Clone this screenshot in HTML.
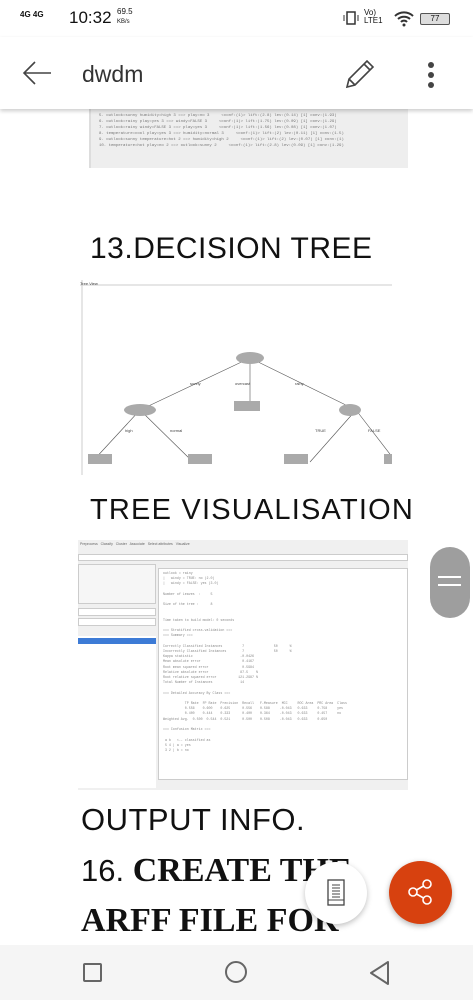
<!DOCTYPE html>
<html><head><meta charset="utf-8"><style>
*{margin:0;padding:0;box-sizing:border-box}
body{width:473px;height:1000px;overflow:hidden;background:#fff;position:relative;font-family:"Liberation Sans",sans-serif;color:#111}
.abs{position:absolute}
.mono{font-family:"Liberation Mono",monospace;font-size:4px;color:#777;white-space:pre;line-height:6px}
</style></head><body>
<div class="abs" style="left:89px;top:105px;width:319px;height:63px;background:#eeeeee;border-left:2px solid #ddd">
<div class="mono" style="position:absolute;left:8px;top:8px">5. outlook=sunny humidity=high 3 ==> play=no 3     &lt;conf:(1)&gt; lift:(2.8) lev:(0.14) [1] conv:(1.93)
6. outlook=rainy play=yes 3 ==> windy=FALSE 3     &lt;conf:(1)&gt; lift:(1.75) lev:(0.09) [1] conv:(1.29)
7. outlook=rainy windy=FALSE 3 ==> play=yes 3     &lt;conf:(1)&gt; lift:(1.56) lev:(0.08) [1] conv:(1.07)
8. temperature=cool play=yes 3 ==> humidity=normal 3     &lt;conf:(1)&gt; lift:(2) lev:(0.11) [1] conv:(1.5)
9. outlook=sunny temperature=hot 2 ==> humidity=high 2     &lt;conf:(1)&gt; lift:(2) lev:(0.07) [1] conv:(1)
10. temperature=hot play=no 2 ==> outlook=sunny 2     &lt;conf:(1)&gt; lift:(2.8) lev:(0.09) [1] conv:(1.29)</div></div>
<div class="abs" style="left:0;top:0;width:473px;height:37px;background:#fff"></div>
<div class="abs" style="left:20px;top:10px;font-size:8px;font-weight:bold">4G 4G</div>
<div class="abs" style="left:69px;top:8px;font-size:17px">10:32</div>
<div class="abs" style="left:117px;top:7px;font-size:8px;line-height:9px">69.5<br><span style="font-size:6px">KB/s</span></div>
<svg class="abs" style="left:343px;top:10px" width="16" height="16"><rect x="4" y="2" width="8" height="12" fill="none" stroke="#333" stroke-width="1.5"/><path d="M1 5v6M15 5v6" stroke="#333"/></svg>
<div class="abs" style="left:364px;top:9px;font-size:8px;line-height:8px">Vo)<br>LTE1</div>
<svg class="abs" style="left:393px;top:9px" width="22" height="18"><path d="M2 7a13 13 0 0 1 18 0M5 10a9 9 0 0 1 12 0M8 13a4 4 0 0 1 6 0" fill="none" stroke="#333" stroke-width="2"/><circle cx="11" cy="16" r="1.5" fill="#333"/></svg>
<div class="abs" style="left:420px;top:13px;width:30px;height:12px;border:1px solid #555;border-radius:2px;font-size:8px;text-align:center;line-height:10px;background:#ddd">77</div>
<div class="abs" style="left:0;top:37px;width:473px;height:72px;background:#fff;box-shadow:0 2px 4px rgba(0,0,0,.2)"></div>
<svg class="abs" style="left:22px;top:60px" width="30" height="26"><path d="M29 13H2M13 2L2 13l11 11" stroke="#444" stroke-width="1.6" fill="none"/></svg>
<div class="abs" style="left:82px;top:61px;font-size:23px;color:#333">dwdm</div>
<svg class="abs" style="left:342px;top:58px" width="34" height="32"><path d="M5 29l2-8L25 3l6 6L13 27zM7 21l6 6M22 6l6 6" stroke="#444" stroke-width="1.6" fill="none"/></svg>
<div class="abs" style="left:428px;top:62px;width:6px;height:6px;border-radius:3px;background:#444;box-shadow:0 10px 0 #444,0 20px 0 #444"></div>
<div class="abs" style="left:90px;top:232px;font-size:30px;color:#111;letter-spacing:0.5px">13.DECISION TREE</div>
<svg class="abs" style="left:80px;top:280px" width="312" height="195">
<rect x="0" y="0" width="312" height="195" fill="#fff"/>
<line x1="0" y1="5" x2="312" y2="5" stroke="#ccc"/><line x1="2" y1="0" x2="2" y2="195" stroke="#ccc"/>
<g stroke="#555" stroke-width=".6"><line x1="170" y1="78" x2="60" y2="130"/><line x1="170" y1="78" x2="170" y2="128"/><line x1="170" y1="78" x2="276" y2="130"/><line x1="60" y1="130" x2="12" y2="182"/><line x1="60" y1="130" x2="113" y2="182"/><line x1="276" y1="130" x2="230" y2="182"/><line x1="276" y1="130" x2="316" y2="182"/></g>
<g fill="#aaa"><ellipse cx="170" cy="78" rx="14" ry="6"/><ellipse cx="60" cy="130" rx="16" ry="6"/><ellipse cx="270" cy="130" rx="11" ry="6"/><rect x="154" y="121" width="26" height="10"/><rect x="8" y="174" width="24" height="10"/><rect x="108" y="174" width="24" height="10"/><rect x="204" y="174" width="24" height="10"/><rect x="304" y="174" width="10" height="10"/></g>
<g font-size="4" fill="#444" font-family="Liberation Sans"><text x="0" y="5">Tree View</text><text x="110" y="105">sunny</text><text x="155" y="105">overcast</text><text x="215" y="105">rainy</text><text x="45" y="152">high</text><text x="90" y="152">normal</text><text x="235" y="152">TRUE</text><text x="288" y="152">FALSE</text></g>
</svg>
<div class="abs" style="left:90px;top:494px;font-size:29px;color:#111;letter-spacing:1.2px">TREE VISUALISATION</div>
<div class="abs" style="left:78px;top:540px;width:330px;height:250px;background:#f0f0f0;overflow:hidden">
<div style="position:absolute;left:0;top:0;width:330px;height:8px;font-size:3.5px;color:#666;padding:2px">Preprocess &nbsp; Classify &nbsp; Cluster &nbsp; Associate &nbsp; Select attributes &nbsp; Visualize</div>
<div style="position:absolute;left:0;top:14px;width:330px;height:7px;background:#fff;border:1px solid #ccc"></div>
<div style="position:absolute;left:0;top:24px;width:78px;height:40px;background:#f6f6f6;border:1px solid #ccc"></div>
<div style="position:absolute;left:0;top:68px;width:78px;height:8px;background:#fff;border:1px solid #ccc"></div>
<div style="position:absolute;left:0;top:78px;width:78px;height:8px;background:#fff;border:1px solid #ccc"></div>
<div style="position:absolute;left:0;top:96px;width:78px;height:152px;background:#fff"><div style="margin-top:2px;height:6px;background:#3d7bd6"></div></div>
<div style="position:absolute;left:80px;top:28px;width:250px;height:212px;background:#fff;border:1px solid #ccc"><div class="mono" style="font-size:3.3px;line-height:5.2px;padding:2px 4px;color:#888">outlook = rainy
|   windy = TRUE: no (2.0)
|   windy = FALSE: yes (3.0)

Number of Leaves  :     5

Size of the tree :      8


Time taken to build model: 0 seconds

=== Stratified cross-validation ===
=== Summary ===

Correctly Classified Instances          7               50      %
Incorrectly Classified Instances        7               50      %
Kappa statistic                        -0.0426
Mean absolute error                     0.4167
Root mean squared error                 0.5984
Relative absolute error                87.5    %
Root relative squared error           121.2987 %
Total Number of Instances              14

=== Detailed Accuracy By Class ===

           TP Rate  FP Rate  Precision  Recall   F-Measure  MCC     ROC Area  PRC Area  Class
           0.556    0.600    0.625      0.556    0.588     -0.043   0.633     0.758     yes
           0.400    0.444    0.333      0.400    0.364     -0.043   0.633     0.457     no
Weighted Avg.  0.500  0.544  0.521      0.500    0.508     -0.043   0.633     0.650

=== Confusion Matrix ===

 a b   <-- classified as
 5 4 | a = yes
 3 2 | b = no</div></div>
</div>
<div class="abs" style="left:430px;top:547px;width:40px;height:71px;border-radius:20px;background:#9e9e9e"></div>
<div class="abs" style="left:438px;top:576px;width:23px;height:2px;background:#fff;box-shadow:0 8px 0 #fff"></div>
<div class="abs" style="left:81px;top:802px;font-size:31px;color:#111;letter-spacing:0.5px">OUTPUT INFO.</div>
<div class="abs" style="left:81px;top:852px;font-size:31px;color:#111;white-space:nowrap">16. <b style="font-family:'Liberation Serif',serif;font-size:34px">CREATE THE</b></div>
<div class="abs" style="left:81px;top:902px;font-size:34px;font-family:'Liberation Serif',serif;font-weight:bold;white-space:nowrap">ARFF FILE FOR</div>
<div class="abs" style="left:305px;top:862px;width:62px;height:62px;border-radius:50%;background:#fff;box-shadow:0 2px 6px rgba(0,0,0,.25)"></div>
<svg class="abs" style="left:325px;top:878px" width="22" height="30"><rect x="3" y="2" width="16" height="25" fill="none" stroke="#444" stroke-width="1.3"/><path d="M7 7h8M7 10h8M7 13h8M7 16h8M7 19h8M3 22h16" stroke="#444" stroke-width="1"/></svg>
<div class="abs" style="left:389px;top:861px;width:63px;height:63px;border-radius:50%;background:#d7410f;box-shadow:0 2px 6px rgba(0,0,0,.3)"></div>
<svg class="abs" style="left:405px;top:877px" width="32" height="32"><g fill="none" stroke="#fff" stroke-width="1.6"><circle cx="22" cy="7" r="4"/><circle cx="8" cy="15" r="4"/><circle cx="22" cy="23" r="4"/><path d="M11.5 13L18.5 9M11.5 17L18.5 21"/></g></svg>
<div class="abs" style="left:0;top:945px;width:473px;height:55px;background:#f5f5f5"></div>
<div class="abs" style="left:83px;top:963px;width:19px;height:19px;border:2px solid #666;border-radius:2px"></div>
<div class="abs" style="left:225px;top:961px;width:22px;height:22px;border:2px solid #666;border-radius:50%"></div>
<svg class="abs" style="left:368px;top:960px" width="24" height="26"><path d="M20 2L3 13l17 11z" fill="none" stroke="#666" stroke-width="2" stroke-linejoin="round"/></svg>
</body></html>
